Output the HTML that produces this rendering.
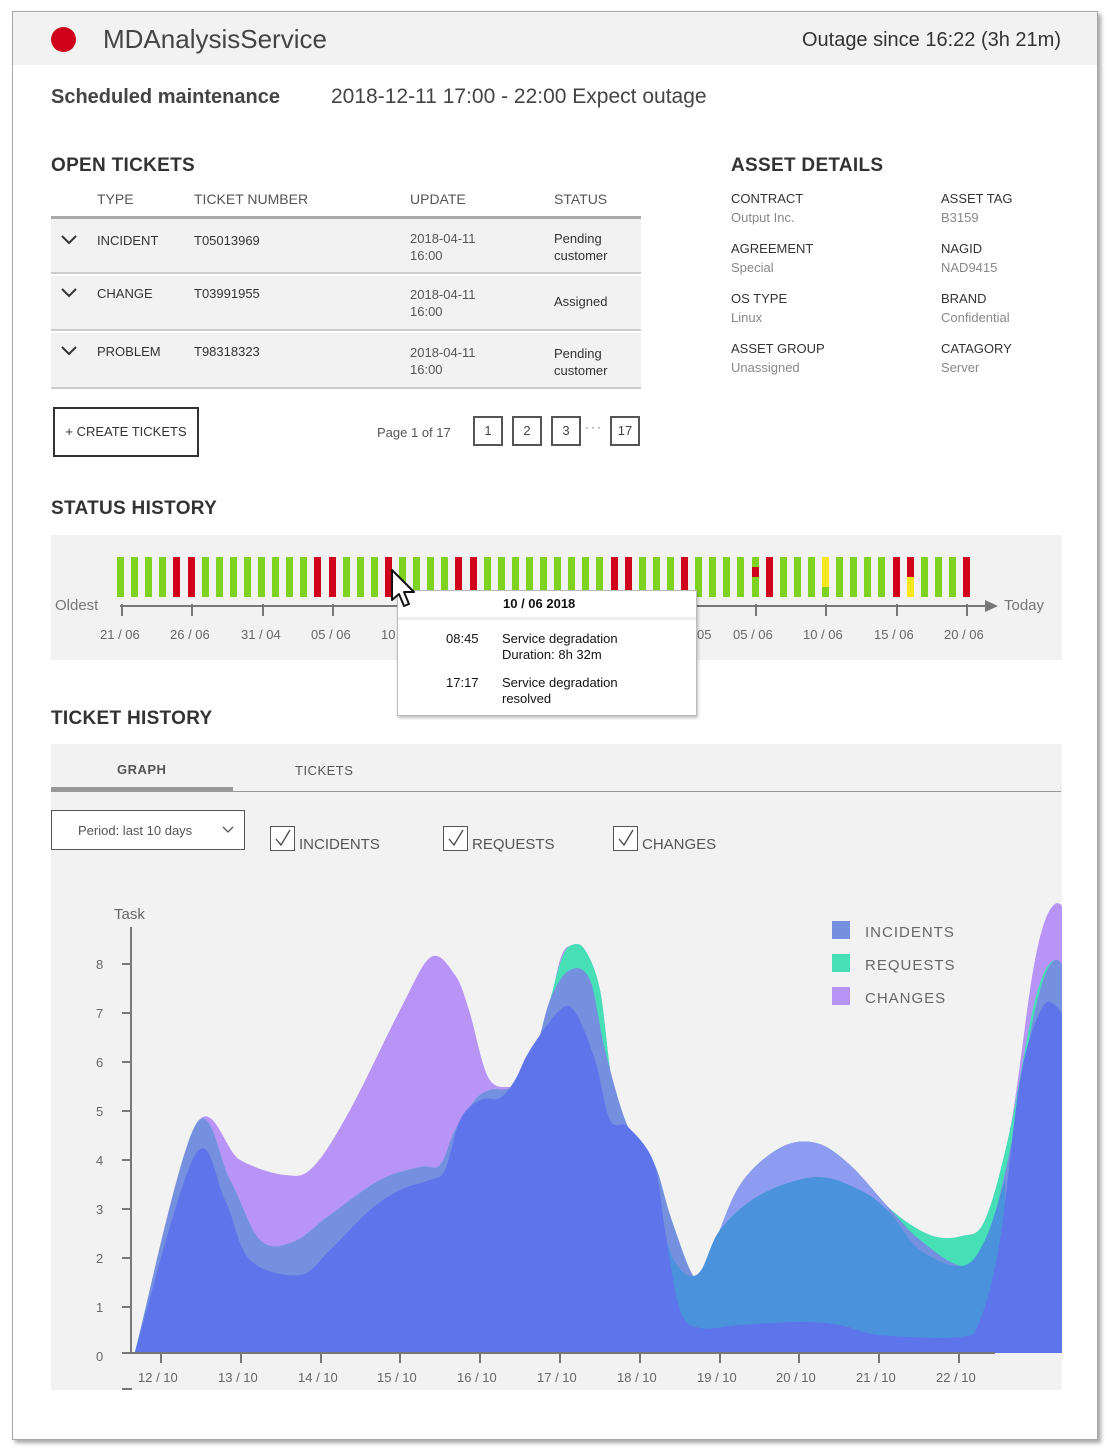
<!DOCTYPE html>
<html><head><meta charset="utf-8"><style>
*{margin:0;padding:0;box-sizing:border-box}
body{width:1108px;height:1453px;background:#fff;font-family:"Liberation Sans",sans-serif;color:#444;position:relative;overflow:hidden}
.a{position:absolute;white-space:nowrap}
.frame{position:absolute;left:12px;top:11px;width:1086px;height:1429px;border:1px solid #a8a8a8;box-shadow:3px 3px 4px rgba(0,0,0,.35);background:#fff}
.h2{font-weight:bold;font-size:19px;color:#333;letter-spacing:.3px}
.th{font-size:14px;color:#555}
.td{font-size:13px;color:#333}
.lab{font-size:13px;color:#333}
.val{font-size:13px;color:#888}
.pg{position:absolute;top:416px;width:30px;height:30px;border:2px solid #555;font-size:13px;text-align:center;line-height:26px;color:#444}
.bar{position:absolute;top:557px;width:7px;height:40px}
.tk{position:absolute;top:604px;width:2px;height:12px;background:#777}
.xl{position:absolute;top:627px;font-size:13px;color:#666}
.cb{position:absolute;top:826px;width:25px;height:25px;border:1px solid #555;background:#fff}
</style></head><body>
<div class="frame"></div>
<div class="a" style="left:13px;top:12px;width:1084px;height:53px;background:#f2f2f2"></div>
<div class="a" style="left:51px;top:27px;width:25px;height:25px;border-radius:50%;background:#d0021b"></div>
<div class="a" style="left:103px;top:24px;font-size:26px;color:#444">MDAnalysisService</div>
<div class="a" style="right:47px;top:29px;font-size:20px;color:#333">Outage since 16:22 (3h 21m)</div>
<div class="a" style="left:51px;top:86px;font-size:20px;font-weight:bold;color:#444">Scheduled maintenance</div>
<div class="a" style="left:331px;top:85px;font-size:21px;color:#444">2018-12-11 17:00 - 22:00 Expect outage</div>

<div class="a h2" style="left:51px;top:155px">OPEN TICKETS</div>
<div class="a th" style="left:97px;top:191px">TYPE</div>
<div class="a th" style="left:194px;top:191px">TICKET NUMBER</div>
<div class="a th" style="left:410px;top:191px">UPDATE</div>
<div class="a th" style="left:554px;top:191px">STATUS</div>
<div class="a" style="left:51px;top:216px;width:590px;height:3px;background:#aaa"></div>
<div class="a" style="left:51px;top:219px;width:590px;height:55px;background:#f2f2f2;border-bottom:2px solid #ccc"></div>
<div class="a" style="left:51px;top:276px;width:590px;height:55px;background:#f2f2f2;border-bottom:2px solid #ccc"></div>
<div class="a" style="left:51px;top:333px;width:590px;height:56px;background:#f2f2f2;border-bottom:2px solid #ccc"></div>
<svg class="a" style="left:60px;top:234px" width="18" height="130"><g fill="none" stroke="#333" stroke-width="2"><path d="M2 2l7 7 7-7"/><path d="M2 55l7 7 7-7"/><path d="M2 113l7 7 7-7"/></g></svg>
<div class="a td" style="left:97px;top:233px">INCIDENT</div>
<div class="a td" style="left:194px;top:233px">T05013969</div>
<div class="a td" style="left:410px;top:230px;color:#555;line-height:17px">2018-04-11<br>16:00</div>
<div class="a td" style="left:554px;top:230px;line-height:17px">Pending<br>customer</div>
<div class="a td" style="left:97px;top:286px">CHANGE</div>
<div class="a td" style="left:194px;top:286px">T03991955</div>
<div class="a td" style="left:410px;top:286px;color:#555;line-height:17px">2018-04-11<br>16:00</div>
<div class="a td" style="left:554px;top:294px">Assigned</div>
<div class="a td" style="left:97px;top:344px">PROBLEM</div>
<div class="a td" style="left:194px;top:344px">T98318323</div>
<div class="a td" style="left:410px;top:344px;color:#555;line-height:17px">2018-04-11<br>16:00</div>
<div class="a td" style="left:554px;top:345px;line-height:17px">Pending<br>customer</div>

<div class="a" style="left:53px;top:407px;width:146px;height:50px;border:2px solid #333;font-size:13px;color:#333;text-align:center;line-height:46px">+ CREATE TICKETS</div>
<div class="a" style="left:377px;top:425px;font-size:13px;color:#555">Page 1 of 17</div>
<div class="pg" style="left:473px">1</div><div class="pg" style="left:512px">2</div><div class="pg" style="left:551px">3</div>
<div class="a" style="left:585px;top:420px;font-size:12px;color:#666;letter-spacing:2px">···</div>
<div class="pg" style="left:610px">17</div>

<div class="a h2" style="left:731px;top:155px">ASSET DETAILS</div>
<div class="a lab" style="left:731px;top:191px">CONTRACT</div><div class="a val" style="left:731px;top:210px">Output Inc.</div>
<div class="a lab" style="left:941px;top:191px">ASSET TAG</div><div class="a val" style="left:941px;top:210px">B3159</div>
<div class="a lab" style="left:731px;top:241px">AGREEMENT</div><div class="a val" style="left:731px;top:260px">Special</div>
<div class="a lab" style="left:941px;top:241px">NAGID</div><div class="a val" style="left:941px;top:260px">NAD9415</div>
<div class="a lab" style="left:731px;top:291px">OS TYPE</div><div class="a val" style="left:731px;top:310px">Linux</div>
<div class="a lab" style="left:941px;top:291px">BRAND</div><div class="a val" style="left:941px;top:310px">Confidential</div>
<div class="a lab" style="left:731px;top:341px">ASSET GROUP</div><div class="a val" style="left:731px;top:360px">Unassigned</div>
<div class="a lab" style="left:941px;top:341px">CATAGORY</div><div class="a val" style="left:941px;top:360px">Server</div>

<div class="a h2" style="left:51px;top:498px">STATUS HISTORY</div>
<div class="a" style="left:51px;top:535px;width:1011px;height:125px;background:#f2f2f2"></div>
<div id="bars"></div>
<div class="a" style="left:55px;top:597px;font-size:15px;color:#777">Oldest</div>
<div class="a" style="left:1004px;top:597px;font-size:15px;color:#777">Today</div>
<div class="a" style="left:120px;top:605px;width:868px;height:2px;background:#777"></div>
<svg class="a" style="left:985px;top:600px" width="14" height="12"><path d="M0 0L13 6 0 12z" fill="#777"/></svg>
<div class="tk" style="left:121px"></div><div class="tk" style="left:191px"></div><div class="tk" style="left:262px"></div><div class="tk" style="left:332px"></div><div class="tk" style="left:755px"></div><div class="tk" style="left:825px"></div><div class="tk" style="left:896px"></div><div class="tk" style="left:966px"></div>
<div class="xl" style="left:100px">21 / 06</div><div class="xl" style="left:170px">26 / 06</div><div class="xl" style="left:241px">31 / 04</div><div class="xl" style="left:311px">05 / 06</div><div class="xl" style="left:381px">10</div>
<div class="xl" style="left:697px">05</div><div class="xl" style="left:733px">05 / 06</div><div class="xl" style="left:803px">10 / 06</div><div class="xl" style="left:874px">15 / 06</div><div class="xl" style="left:944px">20 / 06</div>

<div class="a" style="left:397px;top:590px;width:300px;height:126px;background:#fff;border:1px solid #bbb;box-shadow:1px 2px 3px rgba(0,0,0,.25)"></div>
<div class="a" style="left:398px;top:617px;width:298px;height:3px;background:#eee"></div>
<div class="a" style="left:503px;top:596px;font-size:13px;font-weight:bold;color:#111">10 / 06 2018</div>
<div class="a" style="left:446px;top:631px;font-size:13px;color:#111">08:45</div>
<div class="a" style="left:502px;top:631px;font-size:13px;color:#111;line-height:16px">Service degradation<br>Duration: 8h 32m</div>
<div class="a" style="left:446px;top:675px;font-size:13px;color:#111">17:17</div>
<div class="a" style="left:502px;top:675px;font-size:13px;color:#111;line-height:16px">Service degradation<br>resolved</div>
<svg class="a" style="left:390px;top:568px" width="30" height="42"><path d="M2 2L2 32 9 26 14 38 19 36 14 24 24 24Z" fill="#fff" stroke="#111" stroke-width="2" stroke-linejoin="round"/></svg>

<div class="a h2" style="left:51px;top:708px">TICKET HISTORY</div>
<div class="a" style="left:51px;top:744px;width:1011px;height:646px;background:#f2f2f2"></div>
<div class="a" style="left:117px;top:762px;font-size:13px;color:#555;font-weight:bold;letter-spacing:.5px">GRAPH</div>
<div class="a" style="left:295px;top:763px;font-size:13px;color:#555;letter-spacing:.5px">TICKETS</div>
<div class="a" style="left:51px;top:791px;width:1010px;height:1px;background:#999"></div>
<div class="a" style="left:51px;top:787px;width:182px;height:5px;background:#999"></div>
<div class="a" style="left:51px;top:810px;width:194px;height:40px;background:#fff;border:1px solid #555"></div>
<div class="a" style="left:78px;top:823px;font-size:13px;color:#555">Period: last 10 days</div>
<svg class="a" style="left:222px;top:826px" width="12" height="8"><path d="M1 1l5 5 5-5" fill="none" stroke="#555" stroke-width="1.3"/></svg>
<div class="cb" style="left:270px"></div><div class="cb" style="left:443px"></div><div class="cb" style="left:613px"></div>
<svg class="a" style="left:270px;top:826px" width="370" height="26"><g fill="none" stroke="#444" stroke-width="1.3"><path d="M6 13l5 6 9-15"/><path d="M179 13l5 6 9-15"/><path d="M349 13l5 6 9-15"/></g></svg>
<div class="a" style="left:299px;top:836px;font-size:15px;color:#555">INCIDENTS</div>
<div class="a" style="left:472px;top:836px;font-size:15px;color:#555">REQUESTS</div>
<div class="a" style="left:642px;top:836px;font-size:15px;color:#555">CHANGES</div>

<svg class="a" style="left:0;top:0" width="1108" height="1453" id="ch">
<defs><clipPath id="cl"><rect x="51" y="880" width="1011" height="510"/></clipPath></defs>
<g clip-path="url(#cl)" id="areas"></g>
<g stroke="#777" stroke-width="2" fill="none">
<path d="M131 927V1353"/><path d="M122 1353H995"/>
<path d="M122 964h9M122 1013h9M122 1062h9M122 1111h9M122 1160h9M122 1209h9M122 1258h9M122 1307h9"/>
<path d="M161 1353v10M241 1353v10M321 1353v10M400 1353v10M480 1353v10M560 1353v10M640 1353v10M720 1353v10M799 1353v10M879 1353v10M959 1353v10"/>
<path d="M122 1389h10"/>
</g>
<g font-family="Liberation Sans, sans-serif" font-size="13" fill="#666">
<text x="114" y="919" font-size="15">Task</text>
<text x="96" y="969">8</text><text x="96" y="1018">7</text><text x="96" y="1067">6</text><text x="96" y="1116">5</text><text x="96" y="1165">4</text><text x="96" y="1214">3</text><text x="96" y="1263">2</text><text x="96" y="1312">1</text><text x="96" y="1361">0</text>
<text x="138" y="1382">12 / 10</text><text x="218" y="1382">13 / 10</text><text x="298" y="1382">14 / 10</text><text x="377" y="1382">15 / 10</text><text x="457" y="1382">16 / 10</text><text x="537" y="1382">17 / 10</text><text x="617" y="1382">18 / 10</text><text x="697" y="1382">19 / 10</text><text x="776" y="1382">20 / 10</text><text x="856" y="1382">21 / 10</text><text x="936" y="1382">22 / 10</text>
</g>
<rect x="832" y="921" width="18" height="18" fill="#7690e0"/>
<rect x="832" y="954" width="18" height="18" fill="#47dfb5"/>
<rect x="832" y="987" width="18" height="18" fill="#b794f6"/>
<g font-family="Liberation Sans, sans-serif" font-size="15" fill="#666" letter-spacing="1">
<text x="865" y="937">INCIDENTS</text><text x="865" y="970">REQUESTS</text><text x="865" y="1003">CHANGES</text>
</g>
</svg>
<script>
(function(){
var reds=[4,5,14,15,19,24,25,35,36,40,46,55,60],h='';
for(var i=0;i<61;i++){var x=Math.round(117+i*14.1),c='#7ed321';
 if(reds.indexOf(i)>=0)c='#d0021b';
 if(i==45){h+='<div class="bar" style="left:'+x+'px;background:linear-gradient(#7ed321 0 10px,#d0021b 10px 20px,#7ed321 20px)"></div>';continue;}
 if(i==50){h+='<div class="bar" style="left:'+x+'px;background:linear-gradient(#f8e71c 0 30px,#7ed321 30px)"></div>';continue;}
 if(i==56){h+='<div class="bar" style="left:'+x+'px;background:linear-gradient(#d0021b 0 20px,#f8e71c 20px)"></div>';continue;}
 h+='<div class="bar" style="left:'+x+'px;background:'+c+'"></div>';}
document.getElementById('bars').innerHTML=h;
function cr(p){var d='M'+p[0][0]+' 1353L'+p[0][0]+' '+p[0][1];
 for(var i=0;i<p.length-1;i++){var p0=p[i-1]||p[i],p1=p[i],p2=p[i+1],p3=p[i+2]||p2;
  d+='C'+(p1[0]+(p2[0]-p0[0])/6).toFixed(1)+' '+(p1[1]+(p2[1]-p0[1])/6).toFixed(1)+' '+(p2[0]-(p3[0]-p1[0])/6).toFixed(1)+' '+(p2[1]-(p3[1]-p1[1])/6).toFixed(1)+' '+p2[0]+' '+p2[1];}
 return d+'L'+p[p.length-1][0]+' 1353Z';}
var Lleft=[[135,1352],[195,1126],[230,1180],[260,1240],[293,1242],[330,1215],[380,1180],[420,1167],[440,1165],[455,1130],[475,1100],[490,1090],[510,1088],[530,1070],[550,1000]];
var P=[[135,1352],[195,1126],[240,1160],[285,1175],[313,1167],[350,1110],[400,1010],[431,957],[455,975],[469,1010],[488,1077],[510,1087],[528,1080],[545,1030],[560,960],[572,945],[585,950],[600,990],[612,1080],[628,1127],[654,1163],[670,1215],[690,1270],[698,1274],[710,1255],[740,1185],[780,1148],[816,1143],[850,1165],[889,1208],[930,1235],[962,1236],[985,1220],[1010,1130],[1035,960],[1055,904],[1075,930],[1090,980]];
var T=Lleft.concat([[562,958],[572,945],[585,950],[600,990],[612,1080],[628,1127],[654,1163],[670,1215],[690,1270],[698,1274],[710,1255],[740,1185],[780,1148],[816,1143],[850,1165],[889,1208],[930,1235],[962,1236],[985,1220],[1010,1130],[1035,1000],[1055,960],[1075,990],[1090,1020]]);
var L=Lleft.concat([[570,970],[590,980],[605,1050],[628,1127],[654,1163],[670,1215],[690,1270],[698,1274],[710,1255],[740,1185],[780,1148],[816,1143],[850,1165],[889,1208],[920,1240],[962,1266],[985,1245],[1010,1150],[1035,1010],[1055,960],[1075,990],[1090,1020]]);
var H=[[698,1274],[710,1255],[740,1185],[780,1148],[816,1143],[850,1165],[889,1210]];
var S=[[654,1200],[675,1262],[698,1274],[720,1230],[760,1195],[816,1177],[860,1190],[889,1212],[920,1250],[962,1266],[985,1240],[1005,1180]];
var D=[[135,1352],[195,1155],[225,1200],[250,1260],[300,1275],[330,1250],[370,1210],[400,1190],[430,1180],[445,1170],[460,1120],[480,1100],[500,1098],[515,1080],[530,1050],[560,1010],[575,1012],[595,1060],[610,1120],[628,1127],[654,1163],[665,1230],[680,1310],[700,1328],[740,1325],[800,1322],[840,1325],[880,1335],[960,1337],[980,1320],[1000,1240],[1020,1080],[1040,1012],[1055,1005],[1075,1040],[1090,1080]];
var g='<path d="'+cr(P)+'" fill="#b794f6"/><path d="'+cr(T)+'" fill="#47dfb5"/><path d="'+cr(L)+'" fill="#7690e0"/>'+
'<path d="'+cr(H)+'" fill="#8d9cf0"/>'+
'<path d="'+cr(S)+'" fill="#4a93dc"/><path d="'+cr(D)+'" fill="#5d74ea"/>';
document.getElementById('areas').innerHTML=g;
})();
</script>
</body></html>
